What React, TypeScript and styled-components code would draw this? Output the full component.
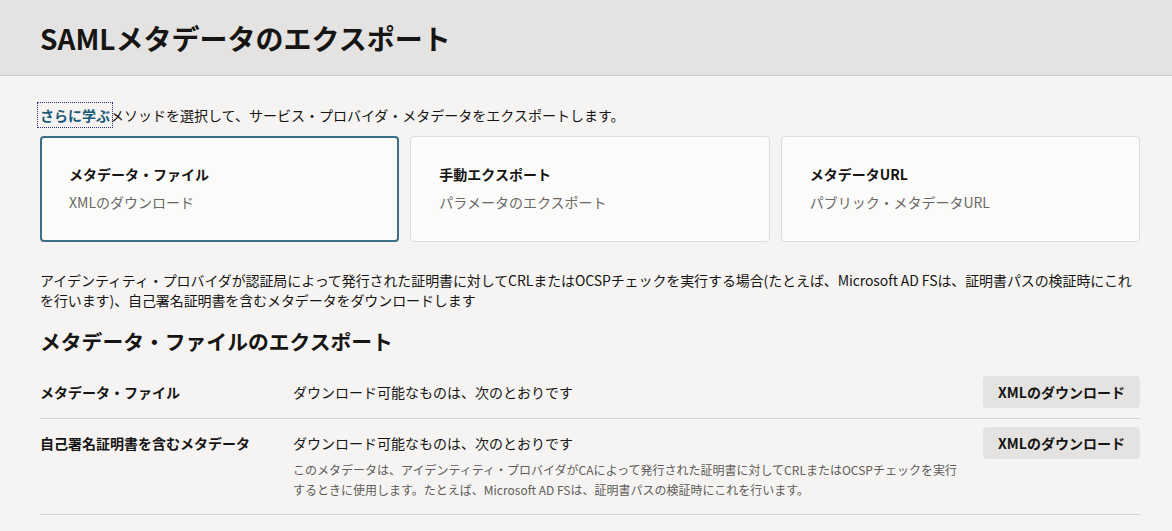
import React from "react";
import styled, { createGlobalStyle } from "styled-components";

const GlobalStyle = createGlobalStyle`
  html, body { margin: 0; padding: 0; }
  body {
    background: #f5f4f2;
    font-family: "Noto Sans CJK JP", "Noto Sans", sans-serif;
    color: #161513;
    -webkit-font-smoothing: antialiased;
  }
`;

const Page = styled.div`
  width: 1172px;
  min-height: 531px;
  background: #f5f4f2;
`;

const Header = styled.header`
  height: 76px;
  background: #e4e3e1;
  border-bottom: 1px solid #cdccca;
  display: flex;
  align-items: center;
  padding: 0 40px;
  box-sizing: border-box;
`;

const Title = styled.h1`
  margin: 0;
  font-size: 28px;
  font-weight: 700;
  line-height: 36px;
  color: #161513;
`;

const Content = styled.main`
  padding: 29px 32px 0 40px;
`;

const Intro = styled.p`
  margin: 0;
  font-size: 14px;
  line-height: 20px;
  color: #161513;
`;

const LearnLink = styled.a`
  display: inline-block;
  color: #1b5a78;
  font-weight: 700;
  text-decoration: none;
  outline: 1px dotted #303080;
  outline-offset: 2px;
  line-height: 20px;
`;

const CardGrid = styled.div`
  margin-top: 11px;
  display: grid;
  grid-template-columns: repeat(3, 1fr);
  gap: 11px;
`;

const Card = styled.div<{ $selected?: boolean }>`
  height: 106px;
  box-sizing: border-box;
  background: #fbfbfa;
  border: ${(p) => (p.$selected ? "2px solid #3e6d88" : "1px solid #dedddb")};
  border-radius: 4px;
  padding: ${(p) => (p.$selected ? "26px 27px" : "27px 28px")};
  display: flex;
  flex-direction: column;
  gap: 8px;
`;

const CardTitle = styled.div`
  font-size: 14px;
  font-weight: 700;
  line-height: 20px;
  color: #161513;
`;

const CardSub = styled.div`
  font-size: 14px;
  line-height: 20px;
  color: #6a6865;
`;

const Note = styled.p`
  margin: 28px 0 0;
  font-size: 14px;
  line-height: 20px;
  letter-spacing: -0.1px;
  color: #161513;
`;

const SectionTitle = styled.h2`
  margin: 17px 0 0;
  font-size: 20.8px;
  font-weight: 700;
  line-height: 28px;
  color: #161513;
`;

const Table = styled.div`
  margin-top: 13px;
`;

const Row = styled.div`
  display: grid;
  grid-template-columns: 253px 1fr auto;
  align-items: start;
  padding: 8px 0 10px;
  border-bottom: 1px solid #d6d5d3;
`;

const Label = styled.div`
  font-size: 14px;
  font-weight: 700;
  line-height: 32px;
  color: #161513;
`;

const Value = styled.div`
  display: flex;
  flex-direction: column;
`;

const ValueText = styled.div`
  font-size: 14px;
  line-height: 32px;
  color: #161513;
`;

const Help = styled.div`
  margin: 1px 0 4px;
  font-size: 12px;
  line-height: 20px;
  color: #5e5c59;
  max-width: 670px;
`;

const Button = styled.button`
  height: 32px;
  width: 157px;
  border: none;
  border-radius: 4px;
  background: #e4e3e1;
  font-family: inherit;
  font-size: 14px;
  font-weight: 700;
  color: #161513;
  cursor: pointer;
`;

export default function App() {
  return (
    <Page>
      <GlobalStyle />
      <Header>
        <Title>SAMLメタデータのエクスポート</Title>
      </Header>
      <Content>
        <Intro>
          <LearnLink href="#">さらに学ぶ</LearnLink>メソッドを選択して、サービス・プロバイダ・メタデータをエクスポートします。
        </Intro>
        <CardGrid>
          <Card $selected>
            <CardTitle>メタデータ・ファイル</CardTitle>
            <CardSub>XMLのダウンロード</CardSub>
          </Card>
          <Card>
            <CardTitle>手動エクスポート</CardTitle>
            <CardSub>パラメータのエクスポート</CardSub>
          </Card>
          <Card>
            <CardTitle>メタデータURL</CardTitle>
            <CardSub>パブリック・メタデータURL</CardSub>
          </Card>
        </CardGrid>
        <Note>
          アイデンティティ・プロバイダが認証局によって発行された証明書に対してCRLまたはOCSPチェックを実行する場合(たとえば、Microsoft AD FSは、証明書パスの検証時にこれを行います)、自己署名証明書を含むメタデータをダウンロードします
        </Note>
        <SectionTitle>メタデータ・ファイルのエクスポート</SectionTitle>
        <Table>
          <Row>
            <Label>メタデータ・ファイル</Label>
            <Value>
              <ValueText>ダウンロード可能なものは、次のとおりです</ValueText>
            </Value>
            <Button>XMLのダウンロード</Button>
          </Row>
          <Row>
            <Label>自己署名証明書を含むメタデータ</Label>
            <Value>
              <ValueText>ダウンロード可能なものは、次のとおりです</ValueText>
              <Help>
                このメタデータは、アイデンティティ・プロバイダがCAによって発行された証明書に対してCRLまたはOCSPチェックを実行するときに使用します。たとえば、Microsoft AD FSは、証明書パスの検証時にこれを行います。
              </Help>
            </Value>
            <Button>XMLのダウンロード</Button>
          </Row>
        </Table>
      </Content>
    </Page>
  );
}
